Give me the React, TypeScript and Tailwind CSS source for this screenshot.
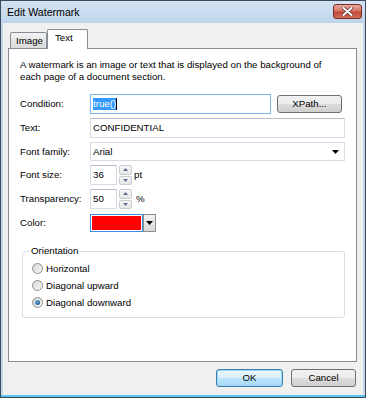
import { useState } from 'react'

const btn =
  'flex h-[18px] items-center justify-center rounded-[3px] border border-[#707070] bg-[linear-gradient(#f2f2f2_0%,#ebebeb_50%,#dddddd_50%,#cfcfcf_100%)] text-[9.7px] text-black'

const Row = ({ label, children }: { label: string; children: React.ReactNode }) => (
  <div className="flex h-[20px] items-center">
    <div className="w-[70px] shrink-0">{label}</div>
    {children}
  </div>
)

const Spinner = () => (
  <div className="ml-[2px] flex h-[20px] w-[13px] flex-col gap-px">
    <div className="flex flex-1 items-center justify-center rounded-[2px] border border-[#c9ced6] bg-[linear-gradient(#f7f7f7,#e6e6e6)]">
      <svg width="5" height="3" viewBox="0 0 5 3">
        <path d="M0 3 L2.5 0 L5 3 Z" fill="#5a6f8f" />
      </svg>
    </div>
    <div className="flex flex-1 items-center justify-center rounded-[2px] border border-[#c9ced6] bg-[linear-gradient(#f7f7f7,#e6e6e6)]">
      <svg width="5" height="3" viewBox="0 0 5 3">
        <path d="M0 0 L2.5 3 L5 0 Z" fill="#5a6f8f" />
      </svg>
    </div>
  </div>
)

const Radio = ({ label, checked }: { label: string; checked?: boolean }) => (
  <div className="flex h-[17px] items-center gap-[3px]">
    <div className="flex h-[11px] w-[11px] items-center justify-center rounded-full border border-[#8e8f8f] bg-[linear-gradient(135deg,#d6d6d6,#f7f7f7)]">
      {checked && (
        <div className="h-[5px] w-[5px] rounded-full bg-[radial-gradient(circle_at_35%_35%,#6ab0e6,#0e3f78)]" />
      )}
    </div>
    <span>{label}</span>
  </div>
)

export default function App() {
  const [orientation] = useState('down')

  return (
    <div className="flex h-[398px] w-[366px] flex-col border border-[#3a4a5c] bg-[#c3d7eb] font-['Liberation_Sans',Arial,sans-serif] text-[9.7px] leading-[12px] text-black">
      {/* title bar */}
      <div className="flex h-[22px] shrink-0 items-start justify-between bg-[linear-gradient(#d3e3f3,#bfd4ea)] pl-[6px] pr-[3px]">
        <span className="mt-[5px] text-[10.6px] leading-[13px]">Edit Watermark</span>
        <div className="mt-[3px] flex h-[15px] w-[29px] items-center justify-center rounded-[3px] border border-[#7c2f26] bg-[linear-gradient(#e8a89c_0%,#d57466_45%,#c2473a_55%,#d0705e_100%)]">
          <svg width="11" height="9" viewBox="0 0 11 9">
            <path d="M1.5 1 L9.5 8 M9.5 1 L1.5 8" stroke="#5a2a24" strokeWidth="3.4" strokeLinecap="round" />
            <path d="M1.5 1 L9.5 8 M9.5 1 L1.5 8" stroke="#ffffff" strokeWidth="2" strokeLinecap="round" />
          </svg>
        </div>
      </div>

      {/* client area */}
      <div className="mx-[2px] flex flex-1 flex-col bg-[#f0f0f0] pl-[5px] pr-[6px] pt-[6px]">
        <div className="relative z-10 flex h-[20px] items-end pl-[2px]">
          <div className="flex h-[17px] w-[37px] items-center rounded-t-[2px] border border-[#898c95] bg-[linear-gradient(#f3f3f3,#dadada)] pl-[5px]">
            Image
          </div>
          <div className="flex h-[20px] w-[41px] items-start rounded-t-[2px] border border-b-0 border-[#898c95] bg-white pl-[7px] pt-[2px]">
            Text
          </div>
        </div>

        <div className="-mt-px h-[314px] border border-[#898c95] bg-white pl-[11px] pr-[11px] pt-[10px]">
          <p>
            A watermark is an image or text that is displayed on the background of
            <br />
            each page of a document section.
          </p>

          <div className="mt-[11px] flex flex-col gap-[4px]">
            <Row label="Condition:">
              <div className="flex h-[20px] w-[181px] items-center border border-[#7eb4ea] pl-[2px]">
                <span className="bg-[#3399ff] text-white">true()</span>
                <span className="h-[12px] w-px bg-black" />
              </div>
              <div className={`${btn} ml-[6px] w-[65px]`}>XPath...</div>
            </Row>
            <Row label="Text:">
              <div className="flex h-[20px] w-[255px] items-center border border-[#d6dce4] border-t-[#b8bec7] pl-[2px]">
                CONFIDENTIAL
              </div>
            </Row>
            <div className="flex h-[19px] items-center">
              <div className="w-[70px] shrink-0">Font family:</div>
              <div className="flex h-[19px] w-[255px] items-center justify-between border border-[#d6dce4] pl-[2px] pr-[5px]">
                <span>Arial</span>
                <svg width="7" height="4" viewBox="0 0 7 4">
                  <path d="M0 0 L7 0 L3.5 4 Z" fill="#000" />
                </svg>
              </div>
            </div>
            <Row label="Font size:">
              <div className="flex h-[20px] w-[27px] items-center border border-[#d6dce4] border-t-[#b8bec7] pl-[2px]">
                36
              </div>
              <Spinner />
              <span className="ml-[2px]">pt</span>
            </Row>
            <Row label="Transparency:">
              <div className="flex h-[20px] w-[27px] items-center border border-[#d6dce4] border-t-[#b8bec7] pl-[2px]">
                50
              </div>
              <Spinner />
              <span className="ml-[4px]">%</span>
            </Row>
            <Row label="Color:">
              <div className="flex h-[18px] w-[53px] border border-[#3c8ee0] p-px">
                <div className="flex-1 bg-[#ff0000]" />
              </div>
              <div className="flex h-[18px] w-[13px] items-center justify-center border border-[#8e8f8f] bg-[linear-gradient(#f2f2f2,#d8d8d8)]">
                <svg width="7" height="4" viewBox="0 0 7 4">
                  <path d="M0 0 L7 0 L3.5 4 Z" fill="#000" />
                </svg>
              </div>
            </Row>
          </div>

          <fieldset className="ml-[2px] mt-[12px] w-[323px] rounded-[3px] border border-[#d5dfe5] px-[9px] pb-[6px] pt-[3px]">
            <legend className="ml-[-2px] px-[1px]">Orientation</legend>
            <Radio label="Horizontal" checked={orientation === 'horizontal'} />
            <Radio label="Diagonal upward" checked={orientation === 'up'} />
            <Radio label="Diagonal downward" checked={orientation === 'down'} />
          </fieldset>
        </div>

        <div className="mt-[7px] flex justify-end gap-[8px] pr-px">
          <div className="flex h-[18px] w-[67px] items-center justify-center rounded-[3px] border border-[#3c7fb1] bg-[linear-gradient(#eaf6fd_0%,#d9f0fc_50%,#bee6fd_50%,#a7d9f5_100%)] shadow-[inset_0_0_0_1px_#9fd6f5]">
            OK
          </div>
          <div className={`${btn} w-[65px]`}>Cancel</div>
        </div>
      </div>
      <div className="h-[2px] shrink-0 bg-[#5cc6ee]" />
    </div>
  )
}
